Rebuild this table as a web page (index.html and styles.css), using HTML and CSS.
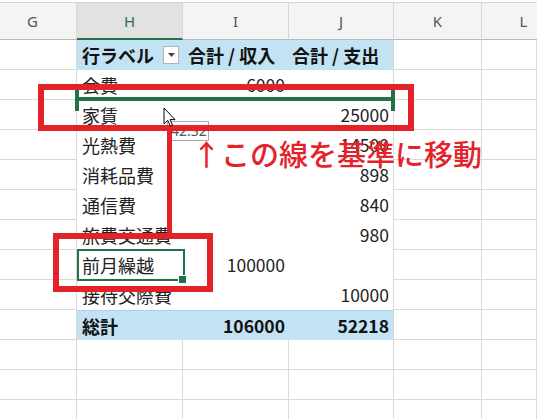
FILE: index.html
```html
<!DOCTYPE html>
<html lang="ja">
<head>
<meta charset="utf-8">
<title>ピボットテーブル</title>
<link rel="stylesheet" href="styles.css">
</head>
<body>
<div class="sheet">
  <div class="colhead g">G</div>
  <div class="colhead sel">H</div>
  <div class="colhead">I</div>
  <div class="colhead">J</div>
  <div class="colhead">K</div>
  <div class="colhead l">L</div>

  <div class="c"></div>
  <div class="p ph lbl">行ラベル<span class="dd"><svg width="7" height="4" viewBox="0 0 7 4"><path d="M0 0h7L3.5 4z" fill="#444"/></svg></span></div>
  <div class="p ph hd hi">合計 / 収入</div>
  <div class="p ph hd hj j">合計 / 支出</div>
  <div class="c"></div><div class="c"></div>

  <div class="c"></div>
  <div class="p lbl">会費</div><div class="p num">6000</div><div class="p num j"></div>
  <div class="c"></div><div class="c"></div>

  <div class="c"></div>
  <div class="p lbl">家賃</div><div class="p num"></div><div class="p num j">25000</div>
  <div class="c"></div><div class="c"></div>

  <div class="c"></div>
  <div class="p lbl">光熱費</div><div class="p num"></div><div class="p num j">14500</div>
  <div class="c"></div><div class="c"></div>

  <div class="c"></div>
  <div class="p lbl">消耗品費</div><div class="p num"></div><div class="p num j">898</div>
  <div class="c"></div><div class="c"></div>

  <div class="c"></div>
  <div class="p lbl">通信費</div><div class="p num"></div><div class="p num j">840</div>
  <div class="c"></div><div class="c"></div>

  <div class="c"></div>
  <div class="p lbl">旅費交通費</div><div class="p num"></div><div class="p num j">980</div>
  <div class="c"></div><div class="c"></div>

  <div class="c"></div>
  <div class="p lbl active">前月繰越</div><div class="p num">100000</div><div class="p num j"></div>
  <div class="c"></div><div class="c"></div>

  <div class="c"></div>
  <div class="p lbl">接待交際費</div><div class="p num"></div><div class="p num j">10000</div>
  <div class="c"></div><div class="c"></div>

  <div class="c"></div>
  <div class="p pt lbl">総計</div><div class="p pt num">106000</div><div class="p pt num j">52218</div>
  <div class="c"></div><div class="c"></div>

  <div class="c"></div><div class="c"></div><div class="c"></div><div class="c"></div><div class="c"></div><div class="c"></div>
  <div class="c"></div><div class="c"></div><div class="c"></div><div class="c"></div><div class="c"></div><div class="c"></div>
  <div class="c"></div><div class="c"></div><div class="c"></div><div class="c"></div><div class="c"></div><div class="c"></div>
</div>

<div class="gline"></div>
<div class="tip">42.32</div>
<div class="rbox box1"></div>
<div class="rbox box2"></div>
<div class="rconn"></div>
<svg class="cursor" width="13" height="20" viewBox="0 0 13 20"><path d="M1 1V17L4.8 13.4L7.4 19.2L9.6 18.2L7 12.6H12Z" fill="#fff" stroke="#000" stroke-width="1" stroke-linejoin="miter"/></svg>
<div class="note">↑この線を基準に移動</div>
</body>
</html>
```
FILE: styles.css
```css
* { box-sizing: border-box; margin: 0; padding: 0; }
body {
  margin: 0;
  width: 537px;
  height: 419px;
  overflow: hidden;
  background: #fff;
  position: relative;
  font-family: "Noto Sans CJK JP", "Noto Sans", sans-serif;
  color: #222;
}
.sheet {
  display: grid;
  grid-template-columns: 77px 106px 106px 105px 88px 55px;
  grid-template-rows: 38px;
  grid-auto-rows: 30px;
  padding-top: 2px;
}
.colhead {
  display: flex;
  align-items: center;
  justify-content: center;
  background: #f4f4f4;
  border-top: 1px solid #d6d6d6;
  border-right: 1px solid #d6d6d6;
  border-bottom: 1px solid #b8b8b8;
  font-family: "Noto Sans", sans-serif;
  font-size: 15px;
  color: #555;
}
.colhead.g { padding-right: 11px; }
.colhead.l { padding-left: 28px; border-right: 0; }
.colhead.sel {
  background: #e2e2e2;
  color: #217346;
  border-bottom: 2px solid #217346;
}
.c {
  border-right: 1px solid #dadada;
  border-bottom: 1px solid #dadada;
}
.p {
  display: flex;
  align-items: center;
  font-size: 18px;
  line-height: 1;
  white-space: nowrap;
  position: relative;
}
.p.j { border-right: 1px solid #dadada; }
.lbl { padding-left: 5px; }
.num { justify-content: flex-end; padding-right: 4px; font-size: 17.5px; }
.ph {
  background: #c3e3f5;
  font-weight: 700;
  color: #111;
}
.hd { justify-content: flex-start; }
.hi { padding-left: 5px; }
.hj { padding-left: 3px; }
.pt {
  background: #c3e3f5;
  font-weight: 700;
  color: #111;
  border-top: 1px solid #a9d2ec;
}
.dd {
  display: flex;
  align-items: center;
  justify-content: center;
  width: 16px;
  height: 18px;
  margin-left: 9px;
  background: #fff;
  border: 1px solid #b5b5b5;
}
.active::before {
  content: "";
  position: absolute;
  left: 0;
  top: -1px;
  right: -2px;
  bottom: -1px;
  border: 2px solid #217346;
}
.active::after {
  content: "";
  position: absolute;
  right: -4px;
  bottom: -4px;
  width: 7px;
  height: 7px;
  background: #217346;
  border: 1px solid #fff;
}
.gline {
  position: absolute;
  left: 75px;
  top: 97px;
  width: 320px;
  height: 4px;
  background: #217346;
}
.gline::before, .gline::after {
  content: "";
  position: absolute;
  top: -8px;
  width: 4px;
  height: 22px;
  background: #217346;
}
.gline::before { left: 0; }
.gline::after { right: 0; }
.tip {
  position: absolute;
  left: 167px;
  top: 121px;
  width: 42px;
  height: 20px;
  padding-left: 3px;
  background: #fff;
  border: 1px solid #a8a8a8;
  font-family: "Noto Sans", sans-serif;
  font-size: 14px;
  line-height: 18px;
  color: #555;
}
.rbox {
  position: absolute;
  border: 6px solid #e42229;
}
.box1 { left: 38px; top: 84px; width: 376px; height: 47px; }
.box2 { left: 53px; top: 233px; width: 160px; height: 59px; }
.rconn {
  position: absolute;
  left: 167px;
  top: 129px;
  width: 5px;
  height: 106px;
  background: #e42229;
}
.cursor {
  position: absolute;
  left: 163px;
  top: 107px;
}
.note {
  position: absolute;
  left: 192px;
  top: 139px;
  font-size: 29px;
  font-weight: 500;
  line-height: 1;
  color: #e42229;
  white-space: nowrap;
}
```
